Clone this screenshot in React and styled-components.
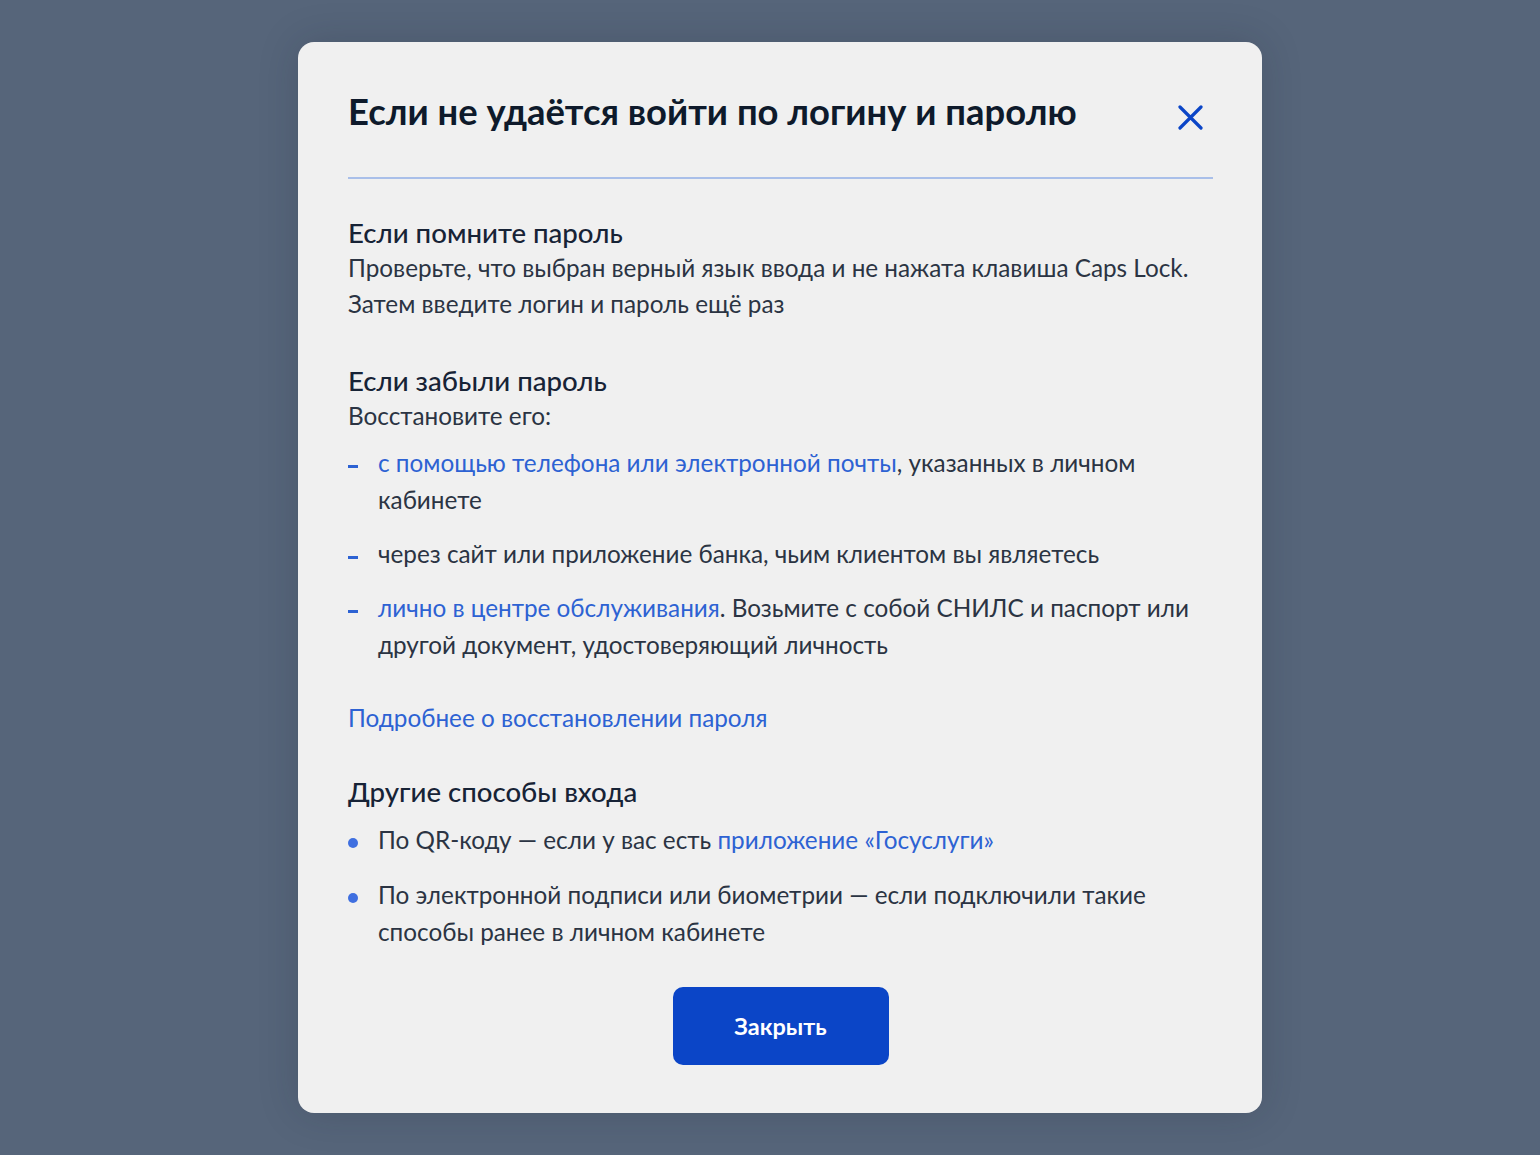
import React from "react";
import styled, { createGlobalStyle } from "styled-components";

const Global = createGlobalStyle`
  html, body { margin: 0; padding: 0; }
  body {
    background: #56657a;
    font-family: Lato, "Noto Sans", sans-serif;
    -webkit-font-smoothing: antialiased;
  }
`;

const Page = styled.div`
  min-height: 1155px;
  box-sizing: border-box;
  padding-top: 42px;
  display: flex;
  justify-content: center;
  background: #56657a;
`;

const Modal = styled.div`
  width: 964px;
  height: 1071px;
  box-sizing: border-box;
  margin-left: 20px;
  background: #f0f0f0;
  border-radius: 16px;
  box-shadow: 0 0 40px rgba(20, 30, 45, 0.18);
  padding: 47px 49px 48px 50px;
  display: flex;
  flex-direction: column;
  color: #2b3443;
`;

const Header = styled.div`
  display: flex;
  align-items: flex-start;
  justify-content: space-between;
  padding-bottom: 44px;
  border-bottom: 2px solid #a9bfe9;
`;

const Title = styled.h1`
  margin: 0;
  font-size: 36.4px;
  line-height: 44px;
  font-weight: 700;
  color: #0e1a2b;
`;

const CloseBtn = styled.button`
  border: none;
  background: none;
  padding: 0;
  margin: 16px 10px 0 0;
  width: 25px;
  height: 25px;
  display: flex;
  cursor: pointer;
`;

const Section = styled.section`
  margin-top: ${(p) => p.$top}px;
`;

const Heading = styled.h2`
  margin: 0;
  font-size: 27.6px;
  line-height: 34px;
  font-weight: 500;
  color: #172336;
`;

const Text = styled.p`
  margin: 0;
  font-size: 24.3px;
  line-height: 36px;
  color: #2b3443;
`;

const Link = styled.a`
  color: #2d62d3;
  text-decoration: none;
`;

const List = styled.ul`
  list-style: none;
  margin: ${(p) => p.$top}px 0 0;
  padding: 0;
  display: flex;
  flex-direction: column;
  gap: ${(p) => p.$gap}px;
`;

const Item = styled.li`
  position: relative;
  padding-left: 30px;
  font-size: 24.3px;
  line-height: 37px;
  color: #2b3443;

  &::before {
    content: "";
    position: absolute;
    left: 0;
    background: #2d62d3;
    ${(p) =>
      p.$dot
        ? `top: 17px; width: 10px; height: 10px; border-radius: 50%; background: #3f6fe0;`
        : `top: 21px; width: 10px; height: 3px;`}
  }
`;

const More = styled.div`
  margin-top: 37px;
  font-size: 24.3px;
  line-height: 36px;
`;

const Footer = styled.div`
  margin-top: auto;
  display: flex;
  justify-content: center;
`;

const Button = styled.button`
  width: 216px;
  height: 78px;
  border: none;
  border-radius: 10px;
  background: #0b45c7;
  color: #ffffff;
  font-family: Lato, "Noto Sans", sans-serif;
  font-size: 23.5px;
  font-weight: 700;
  cursor: pointer;
`;

export default function App() {
  return (
    <>
      <Global />
      <Page>
        <Modal>
          <Header>
            <Title>Если не удаётся войти по логину и паролю</Title>
            <CloseBtn aria-label="Закрыть">
              <svg width="25" height="25" viewBox="0 0 25 25">
                <path d="M2 2 L23 23 M23 2 L2 23" stroke="#0b45c7" strokeWidth="3.2" strokeLinecap="round" />
              </svg>
            </CloseBtn>
          </Header>

          <Section $top={37}>
            <Heading>Если помните пароль</Heading>
            <Text>
              Проверьте, что выбран верный язык ввода и не нажата клавиша Caps Lock.
              <br />
              Затем введите логин и пароль ещё раз
            </Text>
          </Section>

          <Section $top={42}>
            <Heading>Если забыли пароль</Heading>
            <Text>Восстановите его:</Text>
            <List $top={10} $gap={17}>
              <Item>
                <Link href="#">с помощью телефона или электронной почты</Link>, указанных в личном
                кабинете
              </Item>
              <Item>через сайт или приложение банка, чьим клиентом вы являетесь</Item>
              <Item>
                <Link href="#">лично в центре обслуживания</Link>. Возьмите с собой СНИЛС и паспорт или
                другой документ, удостоверяющий личность
              </Item>
            </List>
            <More>
              <Link href="#">Подробнее о восстановлении пароля</Link>
            </More>
          </Section>

          <Section $top={39}>
            <Heading>Другие способы входа</Heading>
            <List $top={12} $gap={18}>
              <Item $dot>
                По QR-коду — если у вас есть <Link href="#">приложение «Госуслуги»</Link>
              </Item>
              <Item $dot>
                По электронной подписи или биометрии — если подключили такие способы ранее в личном
                кабинете
              </Item>
            </List>
          </Section>

          <Footer>
            <Button>Закрыть</Button>
          </Footer>
        </Modal>
      </Page>
    </>
  );
}
